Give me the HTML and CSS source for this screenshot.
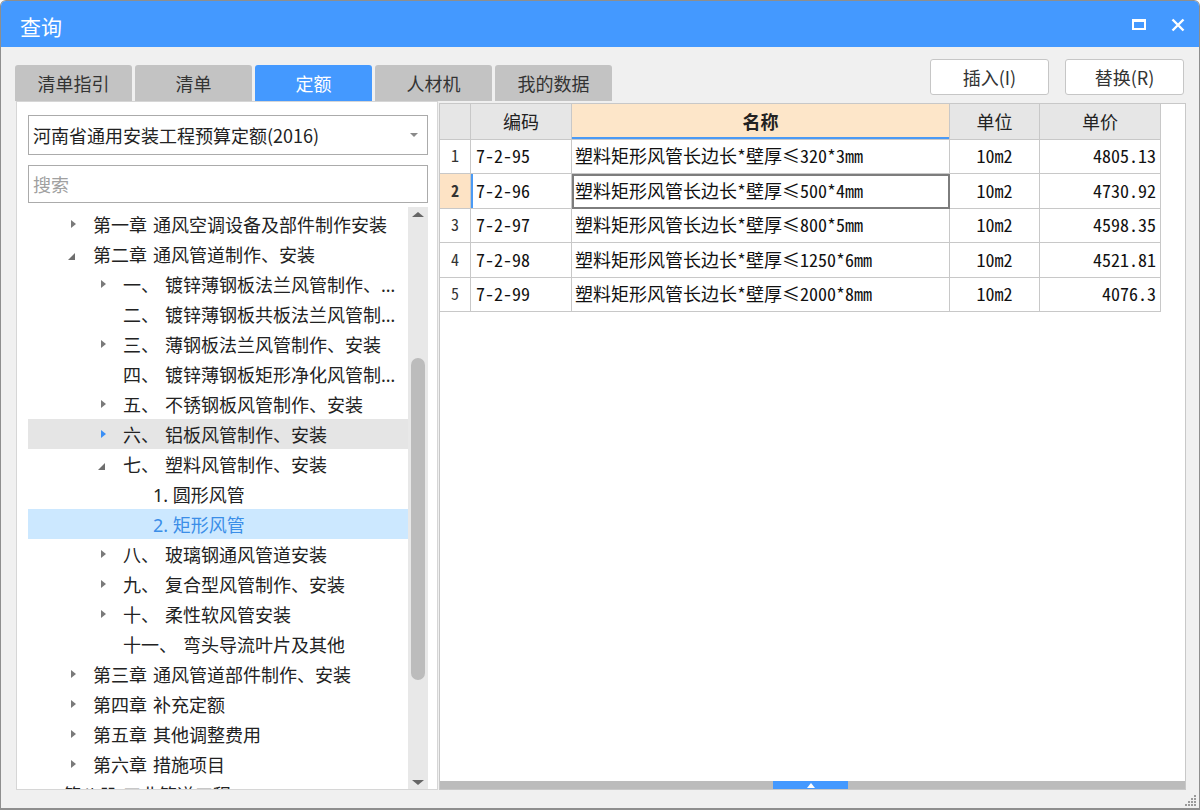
FILE: index.html
```html
<!DOCTYPE html>
<html lang="zh-CN">
<head>
<meta charset="utf-8">
<title>查询</title>
<link rel="stylesheet" href="styles.css">
</head>
<body>
<div class="window">
  <div class="titlebar">
    <span class="title">查询</span>
    <div class="win-controls">
      <svg class="ico" width="14" height="14" viewBox="0 0 14 14"><rect x="1" y="2" width="12" height="9" fill="none" stroke="#fff" stroke-width="2"/><line x1="1" y1="2.5" x2="13" y2="2.5" stroke="#fff" stroke-width="3"/></svg>
      <svg class="ico" width="14" height="14" viewBox="0 0 14 14"><path d="M1.5 1.5 L12.5 12.5 M12.5 1.5 L1.5 12.5" stroke="#fff" stroke-width="2.4" fill="none"/></svg>
    </div>
  </div>

  <div class="toolbar">
    <div class="tabs">
      <div class="tab">清单指引</div>
      <div class="tab">清单</div>
      <div class="tab active">定额</div>
      <div class="tab">人材机</div>
      <div class="tab">我的数据</div>
    </div>
    <div class="actions">
      <button class="btn">插入(I)</button>
      <button class="btn">替换(R)</button>
    </div>
  </div>

  <div class="main">
    <div class="left">
      <div class="select"><span>河南省通用安装工程预算定额(2016)</span><span class="caret"></span></div>
      <div class="search">搜索</div>
      <div class="tree-wrap">
        <div class="tree">
          <div class="row l1"><span class="arrow"><i class="tri-r"></i></span><span class="label"><span class="num">第一章</span>通风空调设备及部件制作安装</span></div>
          <div class="row l1"><span class="arrow"><i class="tri-d"></i></span><span class="label"><span class="num">第二章</span>通风管道制作、安装</span></div>
          <div class="row l2"><span class="arrow"><i class="tri-r"></i></span><span class="label"><span class="num">一、</span>镀锌薄钢板法兰风管制作、安装</span></div>
          <div class="row l2"><span class="arrow"></span><span class="label"><span class="num">二、</span>镀锌薄钢板共板法兰风管制作、安装</span></div>
          <div class="row l2"><span class="arrow"><i class="tri-r"></i></span><span class="label"><span class="num">三、</span>薄钢板法兰风管制作、安装</span></div>
          <div class="row l2"><span class="arrow"></span><span class="label"><span class="num">四、</span>镀锌薄钢板矩形净化风管制作、安装</span></div>
          <div class="row l2"><span class="arrow"><i class="tri-r"></i></span><span class="label"><span class="num">五、</span>不锈钢板风管制作、安装</span></div>
          <div class="row l2 hover"><span class="arrow"><i class="tri-r blue"></i></span><span class="label"><span class="num">六、</span>铝板风管制作、安装</span></div>
          <div class="row l2"><span class="arrow"><i class="tri-d"></i></span><span class="label"><span class="num">七、</span>塑料风管制作、安装</span></div>
          <div class="row l3"><span class="arrow"></span><span class="label">1. 圆形风管</span></div>
          <div class="row l3 selected"><span class="arrow"></span><span class="label">2. 矩形风管</span></div>
          <div class="row l2"><span class="arrow"><i class="tri-r"></i></span><span class="label"><span class="num">八、</span>玻璃钢通风管道安装</span></div>
          <div class="row l2"><span class="arrow"><i class="tri-r"></i></span><span class="label"><span class="num">九、</span>复合型风管制作、安装</span></div>
          <div class="row l2"><span class="arrow"><i class="tri-r"></i></span><span class="label"><span class="num">十、</span>柔性软风管安装</span></div>
          <div class="row l2"><span class="arrow"></span><span class="label"><span class="num">十一、</span>弯头导流叶片及其他</span></div>
          <div class="row l1"><span class="arrow"><i class="tri-r"></i></span><span class="label"><span class="num">第三章</span>通风管道部件制作、安装</span></div>
          <div class="row l1"><span class="arrow"><i class="tri-r"></i></span><span class="label"><span class="num">第四章</span>补充定额</span></div>
          <div class="row l1"><span class="arrow"><i class="tri-r"></i></span><span class="label"><span class="num">第五章</span>其他调整费用</span></div>
          <div class="row l1"><span class="arrow"><i class="tri-r"></i></span><span class="label"><span class="num">第六章</span>措施项目</span></div>
          <div class="row l0"><span class="arrow"><i class="tri-r"></i></span><span class="label"><span class="num">第八册</span>工业管道工程</span></div>
        </div>
        <div class="vscroll">
          <i class="sb-up"></i>
          <div class="sb-thumb"></div>
          <i class="sb-down"></i>
        </div>
      </div>
    </div>

    <div class="right">
      <div class="grid">
        <table class="quota">
          <colgroup>
            <col class="c-idx"><col class="c-code"><col class="c-name"><col class="c-unit"><col class="c-price">
          </colgroup>
          <thead>
            <tr><th class="idx"></th><th>编码</th><th class="cur-col">名称</th><th>单位</th><th>单价</th></tr>
          </thead>
          <tbody>
            <tr><td class="idx">1</td><td class="code">7-2-95</td><td class="name">塑料矩形风管长边长*壁厚≤320*3mm</td><td class="unit">10m2</td><td class="price">4805.13</td></tr>
            <tr class="cur-row"><td class="idx">2</td><td class="code">7-2-96</td><td class="name sel">塑料矩形风管长边长*壁厚≤500*4mm</td><td class="unit">10m2</td><td class="price">4730.92</td></tr>
            <tr><td class="idx">3</td><td class="code">7-2-97</td><td class="name">塑料矩形风管长边长*壁厚≤800*5mm</td><td class="unit">10m2</td><td class="price">4598.35</td></tr>
            <tr><td class="idx">4</td><td class="code">7-2-98</td><td class="name">塑料矩形风管长边长*壁厚≤1250*6mm</td><td class="unit">10m2</td><td class="price">4521.81</td></tr>
            <tr><td class="idx">5</td><td class="code">7-2-99</td><td class="name">塑料矩形风管长边长*壁厚≤2000*8mm</td><td class="unit">10m2</td><td class="price">4076.3</td></tr>
          </tbody>
        </table>
      </div>
      <div class="hscroll"><div class="hs-thumb"><i class="hs-tri"></i></div></div>
    </div>
  </div>

  <div class="statusbar">
    <svg class="grip" width="12" height="12" viewBox="0 0 12 12" fill="#9a9a9a">
      <rect x="9" y="0" width="2" height="2"/>
      <rect x="6" y="3" width="2" height="2"/><rect x="9" y="3" width="2" height="2"/>
      <rect x="3" y="6" width="2" height="2"/><rect x="6" y="6" width="2" height="2"/><rect x="9" y="6" width="2" height="2"/>
      <rect x="0" y="9" width="2" height="2"/><rect x="3" y="9" width="2" height="2"/><rect x="6" y="9" width="2" height="2"/><rect x="9" y="9" width="2" height="2"/>
    </svg>
  </div>
</div>
</body>
</html>
```

FILE: styles.css
```css
* { box-sizing: border-box; }
html, body { margin: 0; padding: 0; }
body {
  width: 1200px;
  height: 810px;
  overflow: hidden;
  background: #ffffff;
  font-family: "Noto Sans CJK SC", "Noto Sans", sans-serif;
}

.window {
  width: 1200px;
  height: 810px;
  border: 1px solid #8e8e8e;
  border-bottom-width: 2px;
  border-radius: 6px 6px 0 0;
  background: #f0f0f0;
  display: flex;
  flex-direction: column;
  overflow: hidden;
}

/* title bar */
.titlebar {
  height: 46px;
  flex: none;
  background: #4499ff;
  display: flex;
  align-items: center;
  justify-content: space-between;
  padding: 0 14px 0 19px;
}
.title {
  color: #fff;
  font-size: 21px;
  line-height: 1;
  margin-top: 4px;
}
.win-controls {
  display: flex;
  align-items: center;
  gap: 25px;
  margin-top: 2px;
}
.ico { display: block; }

/* toolbar */
.toolbar {
  height: 54px;
  flex: none;
  display: flex;
  justify-content: space-between;
  align-items: flex-end;
  padding: 0 15px 0 14px;
}
.tabs { display: flex; gap: 3px; }
.tab {
  width: 117px;
  height: 36px;
  background: #c3c3c3;
  border-radius: 3px 3px 0 0;
  display: flex;
  align-items: center;
  justify-content: center;
  font-size: 18px;
  color: #333;
}
.tab.active { background: #4499ff; color: #fff; }
.actions { display: flex; gap: 16px; padding-bottom: 6px; }
.btn {
  width: 119px;
  height: 36px;
  background: #fff;
  border: 1px solid #c6c6c6;
  border-radius: 3px;
  font-family: "Noto Sans CJK SC", "Noto Sans", sans-serif;
  font-size: 18px;
  color: #333;
  padding: 0;
}

/* main area */
.main {
  flex: 1;
  min-height: 0;
  display: flex;
  gap: 1px;
  padding: 0 13px 0 15px;
}

.left {
  width: 422px;
  flex: none;
  background: #fff;
  border: 1px solid #d6d6d6;
  padding: 13px 9px 0 11px;
  display: flex;
  flex-direction: column;
  min-height: 0;
}
.select {
  height: 40px;
  flex: none;
  border: 1px solid #ababab;
  display: flex;
  align-items: center;
  justify-content: space-between;
  padding: 0 9px 0 4px;
  font-size: 18px;
  color: #222;
}
.caret {
  width: 0;
  height: 0;
  border-top: 4px solid #8a8a8a;
  border-left: 4px solid transparent;
  border-right: 4px solid transparent;
}
.search {
  margin-top: 10px;
  height: 38px;
  flex: none;
  border: 1px solid #ababab;
  padding-left: 4px;
  display: flex;
  align-items: center;
  font-size: 18px;
  color: #a0a0a0;
}

.tree-wrap {
  margin-top: 4px;
  flex: 1;
  min-height: 0;
  display: flex;
}
.tree {
  flex: 1;
  min-width: 0;
  overflow: hidden;
  padding-top: 2px;
}
.row {
  height: 30px;
  display: flex;
  align-items: center;
  font-size: 18px;
  color: #222;
  white-space: nowrap;
  padding-right: 10px;
}
.row.l0 { padding-left: 12px; }
.row.l1 { padding-left: 42px; }
.row.l2 { padding-left: 72px; }
.row.l3 { padding-left: 102px; }
.row.hover { background: #e5e5e5; }
.row.selected { background: #cce8ff; color: #3b8ee8; }
.arrow {
  width: 23px;
  flex: none;
  display: flex;
  align-items: center;
}
.label {
  min-width: 0;
  overflow: hidden;
  text-overflow: ellipsis;
  font-family: "Noto Sans", "Noto Sans CJK SC", sans-serif;
}
.num { margin-right: 6px; }
.tri-r {
  display: block;
  width: 0;
  height: 0;
  margin-left: 1px;
  border-left: 5px solid #7a7a7a;
  border-top: 4.5px solid transparent;
  border-bottom: 4.5px solid transparent;
}
.tri-r.blue { border-left-color: #3b8ff5; }
.tri-d {
  display: block;
  width: 0;
  height: 0;
  margin-left: -2px;
  margin-top: 4px;
  border-bottom: 7px solid #6e6e6e;
  border-left: 7px solid transparent;
}

.vscroll {
  width: 20px;
  flex: none;
  background: #e8e8e8;
  display: flex;
  flex-direction: column;
  align-items: center;
}
.sb-up, .sb-down {
  display: block;
  width: 0;
  height: 0;
  border-left: 6px solid transparent;
  border-right: 6px solid transparent;
}
.sb-up { margin-top: 5px; border-bottom: 5px solid #666; }
.sb-down { margin-top: auto; margin-bottom: 4px; border-top: 5px solid #666; }
.sb-thumb {
  width: 14px;
  height: 322px;
  margin-top: 141px;
  background: #bcbcbc;
  border-radius: 7px;
}

/* right panel */
.right {
  flex: 1;
  min-width: 0;
  margin-top: 2px;
  background: #fff;
  border: 1px solid #c8c8c8;
  display: flex;
  flex-direction: column;
}
.grid { flex: 1; min-height: 0; }

.quota {
  border-collapse: separate;
  border-spacing: 0;
  table-layout: fixed;
  width: 721px;
}
.c-idx { width: 31px; }
.c-code { width: 101px; }
.c-name { width: 378px; }
.c-unit { width: 90px; }
.c-price { width: 121px; }

.quota th, .quota td {
  border-right: 1px solid #c8c8c8;
  border-bottom: 1px solid #c8c8c8;
  padding: 0;
  white-space: nowrap;
  overflow: hidden;
}
.quota th {
  height: 36px;
  background: #e6e6e6;
  font-family: "Noto Sans CJK SC", sans-serif;
  font-weight: normal;
  font-size: 18px;
  color: #222;
  text-align: center;
  padding-bottom: 2px;
}
.quota th.cur-col {
  background: #fde6c9;
  font-weight: bold;
  box-shadow: inset 0 -2px 0 #4a9af5;
}
.quota td {
  height: 34px;
  padding-bottom: 3px;
  font-family: "Noto Sans Mono CJK SC", "Noto Sans CJK SC", monospace;
  font-size: 18px;
  color: #111;
}
.quota tbody tr:nth-child(even) td { height: 35px; }
.quota td.idx { text-align: center; font-size: 16px; color: #333; }
.quota td.code { padding-left: 5px; }
.quota td.name { padding-left: 3px; }
.quota td.unit { text-align: center; }
.quota td.price { text-align: right; padding-right: 4px; }
.cur-row td.idx { background: #fde3c5; font-weight: bold; }
.cur-row td.code { box-shadow: inset 2px 0 0 #4a9af5; }
.quota td.sel { outline: 2px solid #7d7d7d; outline-offset: -2px; }

.hscroll {
  height: 8px;
  flex: none;
  background: #bcbcbc;
  display: flex;
}
.hs-thumb {
  width: 75px;
  margin-left: 333px;
  background: #4499ff;
  display: flex;
  align-items: center;
  justify-content: center;
}
.hs-tri {
  display: block;
  width: 0;
  height: 0;
  border-left: 4px solid transparent;
  border-right: 4px solid transparent;
  border-bottom: 5px solid #fff;
}

/* status bar */
.statusbar {
  height: 18px;
  flex: none;
  display: flex;
  justify-content: flex-end;
  align-items: flex-end;
  padding: 0 2px 1px 0;
}
.grip { display: block; }
```
